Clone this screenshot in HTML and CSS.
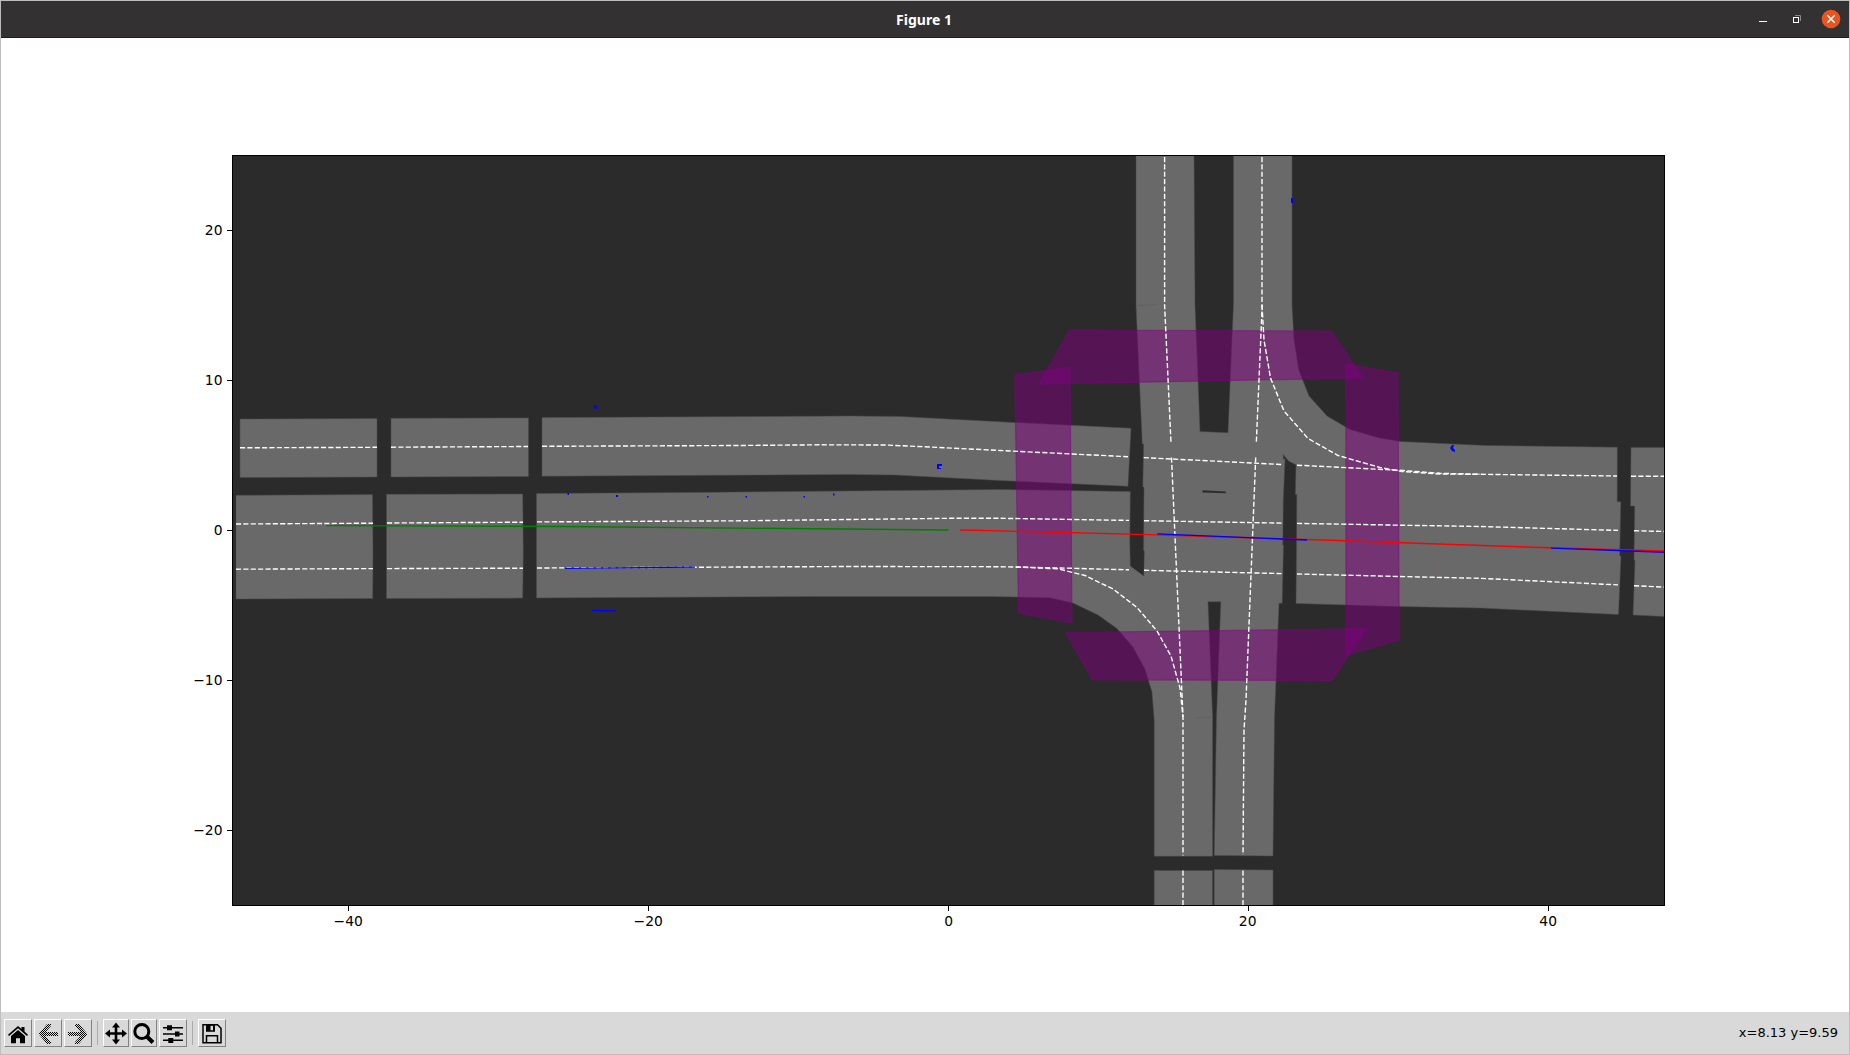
FILE: index.html
```html
<!DOCTYPE html>
<html lang="en">
<head>
<meta charset="utf-8">
<title>Figure 1</title>
<link rel="stylesheet" href="styles.css">
</head>
<body>
<div class="window">
  <header class="titlebar">
    <h1 class="title">Figure 1</h1>
    <div class="controls">
      <svg width="90" height="36" viewBox="1754 1 90 36">
        <path d="M1759 21.5h8" stroke="#fff" fill="none"/>
        <path d="M1795 15.5h5.500v5.500" stroke="#8b8a8a" fill="none"/>
        <rect x="1793.500" y="17.500" width="5" height="5" stroke="#fff" fill="none"/>
        <circle cx="1831" cy="19" r="9.300" fill="#e95420"/>
        <path d="M1827.300 15.300l7.400 7.400M1834.700 15.300l-7.400 7.400" stroke="#fff" stroke-width="1.500"/>
      </svg>
    </div>
  </header>
  <main class="figure">
    <svg class="plot" width="1848" height="974" viewBox="1 38 1848 974">
      <defs><clipPath id="axes"><rect x="232.500" y="155.500" width="1432" height="750"/></clipPath></defs>
      <rect x="232" y="155" width="1433" height="751" fill="#2b2b2b"/>
      <g clip-path="url(#axes)">
        <g class="road">
          <path d="M240 419L377 418.500V477L240 477.600Z"/>
          <path d="M391 418.300L528.500 417.900V476.500L391 477Z"/>
          <path d="M542 417.600L850 416L900 416.400L1000 421.800L1131 428.200L1128 486.300L1000 480.500L895 475L850 474.500L542 476.200Z"/>
          <path d="M236 495.300L372.500 494.600L373 552L372.700 598.500L236 599Z"/>
          <path d="M386.500 494.300L522.700 494L523.300 551.500L522.700 598.100L386.500 598.500Z"/>
          <path d="M1136 150V305L1142.300 444H1143.700L1142.800 487H1144L1143.500 550L1144.300 551L1143.800 576L1130.300 566L1129.800 541L1130.300 491.500L1000 489.500L850 490.900L713 492.300L536.500 493.600V597.900L820 596.500H990L1050 597.700L1073 603L1098 615L1117 628.500L1133 647L1145 669L1152 692L1154.200 720V856.300H1212.600V717L1208 601.800H1220.800L1216.500 717L1214.200 855.500L1273 856L1274.500 717L1279 603.300H1282.200L1283.500 545H1282.800L1283.300 500L1285 459H1283.300V454.500L1288.500 461L1296 464.800L1295.300 494.500H1296.800L1296.500 552.500L1296 603.400L1400 606.600L1480 608L1618.500 614.600L1621 556H1619.700L1620.800 501.700H1617.200L1617.300 447.200L1485 445.500L1400 441.500L1379 438L1350 429.500L1327 416L1309 396L1298.700 370L1294 340L1292 305V150H1233.500V304L1228 432.700L1200 431.500L1195 305L1194 150Z"/>
          <path d="M1154.200 870.500H1212.500V910H1154.200ZM1214.200 869.500L1273 870V910H1214.200Z"/>
          <path d="M1631 447.400H1670V616.800L1633 615.100L1635 560.300H1634L1634.700 506H1630.500Z"/>
        </g>
        <path d="M1202.500 490.300L1225.700 491.500V493.300L1202.500 492.500Z" fill="#2b2b2b"/>
        <path class="seam" d="M1136 305.500L1156 304.700M1196 717.700L1213 717.200"/>
        <g class="crosswalk">
          <path d="M1069.500 330L1331.500 331L1363 378L1039 384.200Z"/>
          <path d="M1014.800 375L1070 367L1072 623L1018.500 613Z"/>
          <path d="M1345.800 364L1398 373L1399.200 640L1346 655.500Z"/>
          <path d="M1065.500 632.500L1367 628.700L1332 680.500L1092.500 679.800Z"/>
        </g>
        <g class="lane">
          <path d="M240 447.800L377 447.300"/>
          <path d="M391 447.200L528 446.500"/>
          <path d="M542 446.300L740 445.500L820 444.800L885 445L930 447L1000 450.500L1128 456.700"/>
          <path d="M1143.700 457.600L1282 464.500"/>
          <path d="M1297 465.200L1400 470.300L1440 473.300L1480 474.300L1617 476"/>
          <path d="M1631 476.200H1664"/>
          <path d="M236 524L373 523.200"/>
          <path d="M387 523L523 522.200"/>
          <path d="M537 521.900L740 520.800L950 518.300H1000L1129 520.400"/>
          <path d="M1144 520.700L1282 523.100"/>
          <path d="M1297 523.400L1400 525.200L1480 526.500L1618 530.400"/>
          <path d="M1634 530.700L1664 531.500"/>
          <path d="M236 569.200L373 568.600"/>
          <path d="M387 568.600L523 568.200"/>
          <path d="M537 568L850 566.500L1000 566.700L1060 568L1129 569.800"/>
          <path d="M1144 570.300L1282 573.600"/>
          <path d="M1297 574L1400 576.500L1480 578.300L1618 584.900"/>
          <path d="M1634 585.700L1664 587.100"/>
          <path d="M1016 567L1058 568.800L1085 575.500L1113 589L1137 607.500L1157 631L1171 656L1180 688L1183 717"/>
          <path d="M1164.600 157V305L1171 443"/>
          <path d="M1171.500 457.500L1183 717V855.500"/>
          <path d="M1183 870.500V906"/>
          <path d="M1262 157V310L1256.300 443"/>
          <path d="M1255.700 457.500L1246 700L1244 730L1243 855"/>
          <path d="M1243 870.500V906"/>
          <path d="M1262 305L1264 340L1270.500 378L1284 411L1308 438.500L1338 455.500L1380 467.500L1402 471.500L1440 474L1480 474.300"/>
        </g>
        <g class="track">
          <path stroke="#008000" d="M326 525.600L560 526.500L948.500 530"/>
          <path stroke="#f00" d="M960 530L1000 530.900L1157 534.900L1330 540.300L1540 547.500L1665 551"/>
          <path stroke="#00f" d="M1157.500 533.900L1307 540M1551 548.100L1665 552.200M565 568.400L695 567.100M592 610.400L616 610.900"/>
        </g>
        <g fill="#00f">
          <path d="M594 405h2l1.500 4h-2l-1.500-2ZM1291 198h2v5h-2ZM937 464h5v2h-3v2h2v1h-4ZM1450 448l2-3h2l-1 3 2 2v2l-3-1Z"/>
          <path d="M567.500 493h1.500v2h-1.500zM616 495h2v2h-2zM707 496h1.500v1.500h-1.500zM745.500 496h1.500v1.500h-1.500zM803.500 496h1.500v1.500h-1.500zM833 493.500h1.500v2h-1.500z"/>
        </g>
      </g>
      <path class="frame" d="M232.500 155.500H1664.500V905.500H232.500ZM348.500 906v5M648.500 906v5M948.500 906v5M1248.500 906v5M1548.500 906v5M232 230.500h-5M232 380.500h-5M232 530.500h-5M232 680.500h-5M232 830.500h-5"/>
      <g class="ticks" text-anchor="middle">
        <text x="348.200" y="926">−40</text><text x="648.200" y="926">−20</text><text x="948.700" y="926">0</text><text x="1247.700" y="926">20</text><text x="1548.200" y="926">40</text>
      </g>
      <g class="ticks" text-anchor="end">
        <text x="222.500" y="235">20</text><text x="222.500" y="385">10</text><text x="222.500" y="535">0</text><text x="222.500" y="685">−10</text><text x="222.500" y="835">−20</text>
      </g>
    </svg>
  </main>
  <footer class="toolbar">
    <button class="tool" aria-label="Home"><svg width="24" height="24" viewBox="0 0 24 24"><path d="M12 4l3.500 3V5h3v4.600L22 12.800l-1 1.200L12 6.300 3 14l-1-1.200Z"/><path d="M12 8l7 6v7.300h-5v-5h-4v5H5V14Z"/></svg></button>
    <button class="tool" aria-label="Back"><svg width="24" height="24" viewBox="0 0 24 24"><defs><pattern id="stipple" width="2" height="2" patternUnits="userSpaceOnUse"><path d="M0 0h1v1H0zM1 1h1v1H1z"/></pattern></defs><path fill="url(#stipple)" d="M11 2h4v2L9.500 10H22v4H9.500l5.500 6v2h-4L3 12.500v-1Z"/></svg></button>
    <button class="tool" aria-label="Forward"><svg width="24" height="24" viewBox="0 0 24 24"><path fill="url(#stipple)" d="M13 2H9v2l5.500 6H2v4h12.500L9 20v2h4l8-9.500v-1Z"/></svg></button>
    <span class="divider"></span>
    <button class="tool tool-narrow" aria-label="Pan"><svg width="24" height="24" viewBox="0 0 24 24"><path d="M12 .5l4 5h-2.700v4.700H18V7.500l5 4-5 4v-2.700h-4.700v4.700H16l-4 5-4-5h2.700v-4.700H6v2.700l-5-4 5-4v2.700h4.700V5.500H8Z"/></svg></button>
    <button class="tool tool-narrow" aria-label="Zoom"><svg width="24" height="24" viewBox="0 0 24 24" fill="none" stroke="#000"><circle cx="9.800" cy="9.500" r="7" stroke-width="3"/><path stroke-width="4" d="M14.800 14.500l6.200 6"/></svg></button>
    <button class="tool" aria-label="Configure subplots"><svg width="24" height="24" viewBox="0 0 24 24"><path d="M2 5h20v1.500H2zM2 11.300h20v1.500H2zM2 17.600h20v1.500H2zM6 3.300h5v4.900H6zM14 9.600h4.500v4.900H14zM7.300 16h5v4.900h-5z"/></svg></button>
    <span class="divider"></span>
    <button class="tool" aria-label="Save"><svg width="24" height="24" viewBox="0 0 24 24"><path fill="none" stroke="#000" stroke-width="1.500" d="M3 2.700h14.500L21 6.200V20.700H3ZM6.500 20.700v-7h11v7"/><path fill-rule="evenodd" d="M6 2.700h9v7H6ZM10.500 3.700v4.500H13V3.700Z"/></svg></button>
    <output class="coords">x=8.13 y=9.59</output>
  </footer>
</div>
</body>
</html>
```
FILE: styles.css
```css
* { box-sizing: border-box; }
body { margin: 0; background: #fff; }
.window {
  display: flex;
  flex-direction: column;
  width: 1850px;
  height: 1055px;
  border: 1px solid #bdbdbd;
}
.titlebar {
  display: grid;
  grid-template-columns: 1fr auto 1fr;
  align-items: center;
  height: 37px;
  flex: none;
  background: #333132;
  border-bottom: 1px solid #1f1e1e;
}
.title {
  grid-column: 2;
  margin: 0;
  padding-right: 2px;
  color: #fff;
  font: bold 14px "Noto Sans", sans-serif;
}
.controls { justify-self: end; height: 36px; padding-right: 5px; }
.controls svg, .plot, .tool svg { display: block; }
.figure { height: 974px; flex: none; background: #fff; }
.road { fill: #696969; stroke: #4b4b4b; stroke-width: .5; }
.seam { fill: none; stroke: #5b5b5b; stroke-width: .5; }
.crosswalk { fill: #800080; fill-opacity: .5; stroke: #800080; stroke-opacity: .5; stroke-width: 1.200; }
.lane { fill: none; stroke: #fff; stroke-width: 1.390; stroke-dasharray: 5.140 2.220; }
.track { fill: none; stroke-width: 1.390; }
.frame { fill: none; stroke: #000; stroke-width: 1; }
.ticks { font: 13.890px "DejaVu Sans", sans-serif; fill: #000; }
.toolbar {
  display: flex;
  align-items: center;
  flex: 1;
  padding: 0 11px 0 3px;
  background: #d9d9d9;
}
.tool {
  width: 28px;
  height: 28px;
  margin: 0 2px 0 0;
  padding: 2px 1px 0;
  border: 1px solid;
  border-color: #fff #828282 #828282 #fff;
  background: #d9d9d9;
}
.tool-narrow { width: 26px; padding: 2px 0 0; }
.divider { width: 1px; height: 24px; margin: 0 5px 0 3px; background: #aaa; }
.coords {
  margin-left: auto;
  padding-bottom: 2px;
  font: 13px "DejaVu Sans", sans-serif;
  color: #000;
}
```
